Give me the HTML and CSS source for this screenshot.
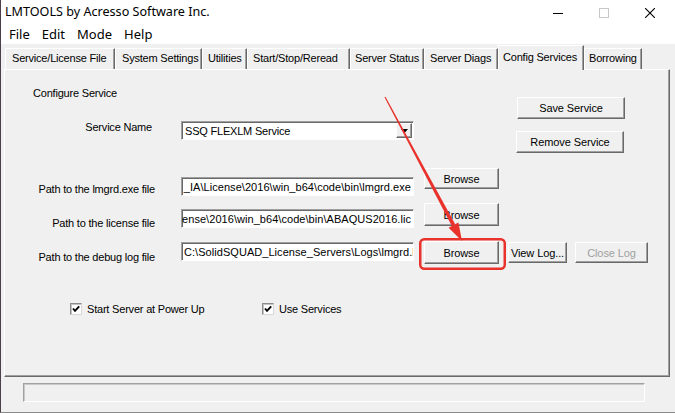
FILE: index.html
```html
<!DOCTYPE html>
<html lang="en">
<head>
<meta charset="utf-8">
<title>LMTOOLS by Acresso Software Inc.</title>
<link rel="stylesheet" href="styles.css">
</head>
<body>
<div class="window">
  <header class="titlebar">
    <span class="title">LMTOOLS by Acresso Software Inc.</span>
    <div class="caption-btns">
      <span class="cap"><svg width="10" height="10" viewBox="0 0 10 10"><line x1="0" y1="5.5" x2="10" y2="5.5" stroke="#000" stroke-width="1"/></svg></span>
      <span class="cap"><svg width="10" height="10" viewBox="0 0 10 10"><rect x="0.5" y="0.5" width="9" height="9" fill="none" stroke="#c8c8c8" stroke-width="1"/></svg></span>
      <span class="cap"><svg width="10" height="10" viewBox="0 0 10 10"><path d="M0 0 L10 10 M10 0 L0 10" stroke="#000" stroke-width="1.1"/></svg></span>
    </div>
  </header>

  <nav class="menubar">
    <span class="menu-item">File</span>
    <span class="menu-item">Edit</span>
    <span class="menu-item">Mode</span>
    <span class="menu-item">Help</span>
  </nav>

  <div class="tabstrip">
    <span class="tab">Service/License File</span>
    <span class="tab">System Settings</span>
    <span class="tab">Utilities</span>
    <span class="tab">Start/Stop/Reread</span>
    <span class="tab">Server Status</span>
    <span class="tab">Server Diags</span>
    <span class="tab tab--active">Config Services</span>
    <span class="tab">Borrowing</span>
  </div>

  <section class="panel">
    <div class="top">
      <div class="top-left">
        <div class="group-title">Configure Service</div>
        <div class="service-row">
          <span class="svc-label">Service Name</span>
          <div class="combo">
            <span class="combo-text">SSQ FLEXLM Service</span>
            <span class="combo-btn"><svg width="7" height="4" viewBox="0 0 7 4"><path d="M0 0 H7 L3.5 4 Z" fill="#000"/></svg></span>
          </div>
        </div>
      </div>
      <div class="top-right">
        <button class="btn btn--save">Save Service</button>
        <button class="btn btn--remove">Remove Service</button>
      </div>
    </div>

    <div class="path-row row--exe">
      <span class="plabel">Path to the lmgrd.exe file</span>
      <div class="field field--end"><span>_IA\License\2016\win_b64\code\bin\lmgrd.exe</span></div>
      <button class="btn browse">Browse</button>
    </div>

    <div class="path-row row--lic">
      <span class="plabel">Path to the license file</span>
      <div class="field field--end"><span>ense\2016\win_b64\code\bin\ABAQUS2016.lic</span></div>
      <button class="btn browse">Browse</button>
    </div>

    <div class="path-row row--log">
      <span class="plabel">Path to the debug log file</span>
      <div class="field"><span>C:\SolidSQUAD_License_Servers\Logs\lmgrd.log</span></div>
      <button class="btn browse">Browse</button>
      <button class="btn btn--viewlog">View Log...</button>
      <button class="btn btn--closelog" disabled>Close Log</button>
    </div>

    <div class="checks">
      <label class="check-item check-item--first">
        <span class="checkbox"><svg width="10" height="10" viewBox="0 0 10 10"><path d="M2 4.5 L4 6.8 L8.2 2.3" fill="none" stroke="#000" stroke-width="1.9"/></svg></span>
        <span>Start Server at Power Up</span>
      </label>
      <label class="check-item">
        <span class="checkbox"><svg width="10" height="10" viewBox="0 0 10 10"><path d="M2 4.5 L4 6.8 L8.2 2.3" fill="none" stroke="#000" stroke-width="1.9"/></svg></span>
        <span>Use Services</span>
      </label>
    </div>
  </section>

  <div class="statusbar">
    <div class="status-field"></div>
  </div>
</div>

<!-- red callout: arrow pointing at the log file Browse button -->
<svg class="callout" width="675" height="413" viewBox="0 0 675 413">
  <polygon points="385.5,96.7 455.2,224.3 451.8,226.1 384.5,97.3" fill="#e8322b"/>
  <polygon points="462,241 458.4,222.5 448.6,227.7" fill="#e8322b"/>
  <rect x="420.25" y="239.25" width="84.5" height="29.5" rx="4" fill="none" stroke="#e8322b" stroke-width="2.5"/>
</svg>
</body>
</html>
```

FILE: styles.css
```css
* {
  box-sizing: border-box;
}

html,
body {
  margin: 0;
  padding: 0;
}

body {
  position: relative;
  width: 675px;
  height: 413px;
  overflow: hidden;
  background: #f0f0f0;
  font-family: "Liberation Sans", Arial, sans-serif;
  font-size: 11px;
  letter-spacing: -0.2px;
  color: #000;
}

.window {
  width: 675px;
  height: 413px;
  display: flex;
  flex-direction: column;
  background: #f0f0f0;
  border-left: 1px solid #4d3f49;
  border-bottom: 1px solid #8a8a8a;
}

/* ---- title bar ---- */
.titlebar {
  flex: none;
  height: 23px;
  background: #fff;
  display: flex;
  align-items: center;
  padding-left: 4px;
}

.title {
  font-family: "Noto Sans", "Liberation Sans", sans-serif;
  font-size: 12.6px;
  letter-spacing: 0;
  color: #000;
  white-space: nowrap;
}

.caption-btns {
  margin-left: auto;
  margin-right: 2px;
  display: flex;
  height: 100%;
}

.cap {
  width: 46px;
  display: flex;
  align-items: center;
  justify-content: center;
  padding-top: 2px;
}

/* ---- menu bar ---- */
.menubar {
  flex: none;
  height: 21px;
  background: #fff;
  display: flex;
  align-items: center;
  padding-left: 2px;
  font-family: "Noto Sans", "Liberation Sans", sans-serif;
  font-size: 13px;
  letter-spacing: 0;
}

.menu-item {
  padding: 0 6px;
}

/* ---- tab strip ---- */
.tabstrip {
  flex: none;
  height: 25px;
  display: flex;
  align-items: flex-end;
  padding-left: 4px;
}

.tab {
  flex: none;
  height: 21px;
  line-height: 19px;
  padding: 0 0 0 6px;
  white-space: nowrap;
  background: #f0f0f0;
  border-top: 1px solid #fff;
  border-left: 1px solid #fff;
  border-right: 1px solid #696969;
  box-shadow: inset -1px 0 #a0a0a0;
}

.tab:nth-child(1) { width: 110px; }
.tab:nth-child(2) { width: 87px; }
.tab:nth-child(3) { width: 45px; padding-left: 5px; }
.tab:nth-child(4) { width: 103px; padding-left: 5px; }
.tab:nth-child(5) { width: 74px; padding-left: 4px; }
.tab:nth-child(6) { width: 74px; padding-left: 5px; }
.tab:nth-child(7) { width: 86px; padding-left: 4px; }
.tab:nth-child(8) { width: 58px; padding-left: 4px; }

.tab--active {
  position: relative;
  z-index: 1;
  height: 25px;
  margin-bottom: -1px;
  padding-top: 2px;
}

/* ---- tab page ---- */
.panel {
  flex: none;
  height: 308px;
  width: 666px;
  margin-left: 3px;
  border: 1px solid;
  border-color: #fff #696969 #696969 #fff;
  box-shadow: inset -1px -1px #a0a0a0;
}

.top {
  display: flex;
  height: 84px;
}

.top-left {
  width: 512px;
  padding-top: 16px;
}

.group-title {
  margin-left: 28px;
  line-height: 14px;
}

.service-row {
  display: flex;
  align-items: flex-start;
  margin-top: 21px;
}

.svc-label {
  width: 147px;
  text-align: right;
  line-height: 12px;
}

.combo {
  margin-left: 29px;
  width: 233px;
  height: 19px;
  display: flex;
  align-items: center;
  background: #fff;
  border: 1px solid;
  border-color: #a0a0a0 #fff #fff #a0a0a0;
  box-shadow: inset 1px 1px #696969;
}

.combo-text {
  flex: 1;
  padding-left: 3px;
  white-space: nowrap;
}

.combo-btn {
  width: 16px;
  height: 15px;
  margin-right: 1px;
  display: flex;
  align-items: center;
  justify-content: center;
  background: #f0f0f0;
  border: 1px solid;
  border-color: #fff #696969 #696969 #fff;
  box-shadow: inset -1px -1px #a0a0a0;
}

.top-right {
  padding-top: 27px;
  display: flex;
  flex-direction: column;
  align-items: flex-start;
  gap: 12px;
}

/* ---- push buttons ---- */
.btn {
  font-family: "Liberation Sans", Arial, sans-serif;
  font-size: 11px;
  letter-spacing: -0.1px;
  color: #000;
  background: #f0f0f0;
  padding: 0;
  margin: 0;
  border: 1px solid;
  border-color: #fff #696969 #696969 #fff;
  box-shadow: inset -1px -1px #a0a0a0;
  white-space: nowrap;
}

.btn:disabled {
  color: #a0a0a0;
}

.btn--save {
  width: 108px;
  height: 22px;
}

.btn--remove {
  width: 108px;
  height: 22px;
  margin-left: -1px;
}

/* ---- path rows ---- */
.path-row {
  display: flex;
  align-items: flex-start;
}

.row--exe {
  margin-top: 14px;
  height: 35px;
  --label-top: 14px;
  --field-top: 9px;
  --btn-h: 21px;
}

.row--lic {
  height: 38px;
  --label-top: 13px;
  --field-top: 6px;
  --btn-h: 23px;
}

.row--log {
  height: 23px;
  --label-top: 9px;
  --field-top: 1px;
  --btn-h: 23px;
}

.plabel {
  width: 150px;
  text-align: right;
  line-height: 14px;
  margin-top: var(--label-top);
  white-space: nowrap;
}

.field {
  margin-left: 26px;
  margin-top: var(--field-top);
  width: 233px;
  height: 19px;
  display: flex;
  align-items: center;
  overflow: hidden;
  background: #fff;
  border: 1px solid;
  border-color: #a0a0a0 #fff #fff #a0a0a0;
  box-shadow: inset 1px 1px #696969;
  padding: 0 2px 0 2px;
  white-space: nowrap;
  letter-spacing: 0.05px;
}

.field--end {
  justify-content: flex-end;
}

.field span {
  flex: none;
}

.browse {
  margin-left: 10px;
  width: 75px;
  height: var(--btn-h);
}

.btn--viewlog {
  margin-left: 9px;
  margin-top: 1px;
  width: 59px;
  height: 21px;
}

.btn--closelog {
  margin-left: 8px;
  margin-top: 1px;
  width: 73px;
  height: 21px;
}

/* ---- check boxes ---- */
.checks {
  display: flex;
  margin-top: 39px;
  padding-left: 65px;
}

.check-item {
  display: flex;
  align-items: center;
  gap: 5px;
  line-height: 12px;
}

.check-item--first {
  width: 192px;
}

.checkbox {
  width: 12px;
  height: 12px;
  display: flex;
  align-items: center;
  justify-content: center;
  background: #fff;
  border: 1px solid;
  border-color: #8c8c8c #d8d8d8 #d8d8d8 #8c8c8c;
  box-shadow: inset 1px 1px #c4c4c4;
}

/* ---- status bar ---- */
.statusbar {
  flex: 1;
  padding: 6px 0 0 22px;
}

.status-field {
  width: 622px;
  height: 19px;
  border: 1px solid;
  border-color: #a0a0a0 #fff #fff #a0a0a0;
  box-shadow: inset 1px 1px #c8c8c8;
}

/* ---- annotation overlay ---- */
.callout {
  position: absolute;
  left: 0;
  top: 0;
  pointer-events: none;
}
```
